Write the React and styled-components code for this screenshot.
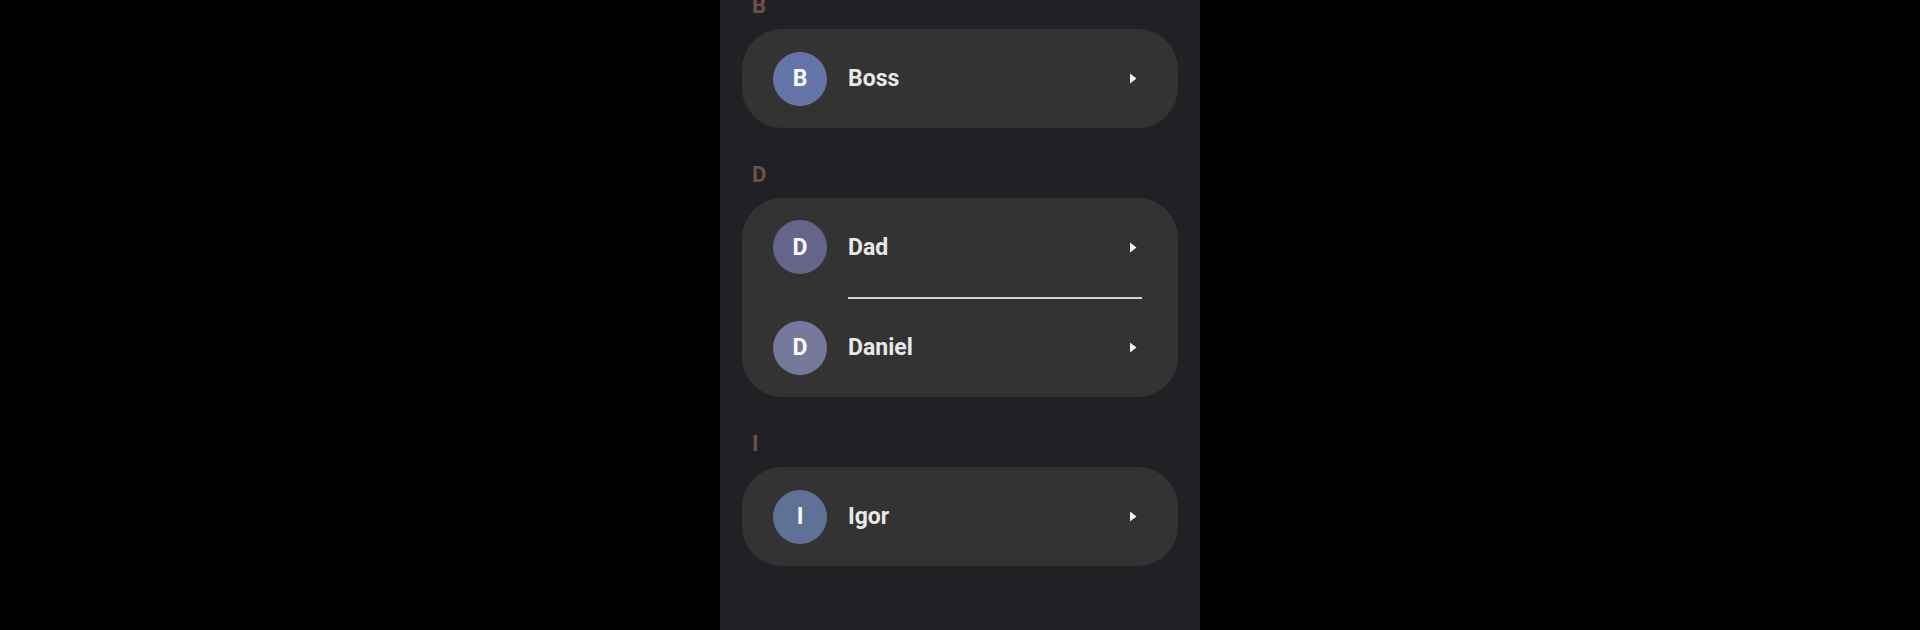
import React from "react";
import styled, { createGlobalStyle } from "styled-components";

const Global = createGlobalStyle`
  html, body { margin: 0; padding: 0; background: #000; height: 100%; }
  body { font-family: Roboto, "Noto Sans", sans-serif; }
  #root { height: 100%; }
`;

const Page = styled.div`
  display: flex;
  justify-content: center;
  height: 630px;
  overflow: hidden;
  background: #000;
`;

const Panel = styled.div`
  width: 480px;
  height: 100%;
  background: #202124;
  overflow: hidden;
  display: flex;
  flex-direction: column;
`;

const List = styled.div`
  margin-top: -7px;
  display: flex;
  flex-direction: column;
  gap: 34px;
`;

const Section = styled.section`
  display: flex;
  flex-direction: column;
`;

const Header = styled.div`
  padding-left: 32px;
  margin-bottom: 10px;
  font-size: 22px;
  line-height: 26px;
  font-weight: 700;
  color: #6e504b;
`;

const Card = styled.div`
  margin: 0 22px;
  background: #333333;
  border-radius: 40px;
  display: flex;
  flex-direction: column;
`;

const Row = styled.div`
  display: flex;
  align-items: center;
  height: ${(p) => (p.$multi ? "98.5px" : "99px")};
  padding: 0 41px 0 31px;
`;

const Avatar = styled.div`
  width: 54px;
  height: 54px;
  border-radius: 50%;
  background: ${(p) => p.$color};
  color: #fafafa;
  display: flex;
  align-items: center;
  justify-content: center;
  font-size: 23px;
  font-weight: 700;
  flex-shrink: 0;
`;

const Name = styled.div`
  flex: 1;
  margin-left: 21px;
  font-size: 23px;
  font-weight: 700;
  color: #e8e8e8;
`;

const Divider = styled.div`
  height: 2px;
  margin: 0 36px 0 106px;
  background: #d2d2d2;
`;

const Chevron = () => (
  <svg width="8" height="11" viewBox="0 0 8 11">
    <path d="M1 0.5 L7.5 5.5 L1 10.5 Z" fill="#f2f2f2" />
  </svg>
);

const sections = [
  { letter: "B", contacts: [{ name: "Boss", color: "#6474a6" }] },
  {
    letter: "D",
    contacts: [
      { name: "Dad", color: "#65658c" },
      { name: "Daniel", color: "#77799c" },
    ],
  },
  { letter: "I", contacts: [{ name: "Igor", color: "#5f7197" }] },
];

export default function App() {
  return (
    <>
      <Global />
      <Page>
        <Panel>
          <List>
            {sections.map((s) => (
              <Section key={s.letter}>
                <Header>{s.letter}</Header>
                <Card>
                  {s.contacts.map((c, i) => (
                    <React.Fragment key={c.name}>
                      {i > 0 && <Divider />}
                      <Row $multi={s.contacts.length > 1}>
                        <Avatar $color={c.color}>{c.name[0]}</Avatar>
                        <Name>{c.name}</Name>
                        <Chevron />
                      </Row>
                    </React.Fragment>
                  ))}
                </Card>
              </Section>
            ))}
          </List>
        </Panel>
      </Page>
    </>
  );
}
